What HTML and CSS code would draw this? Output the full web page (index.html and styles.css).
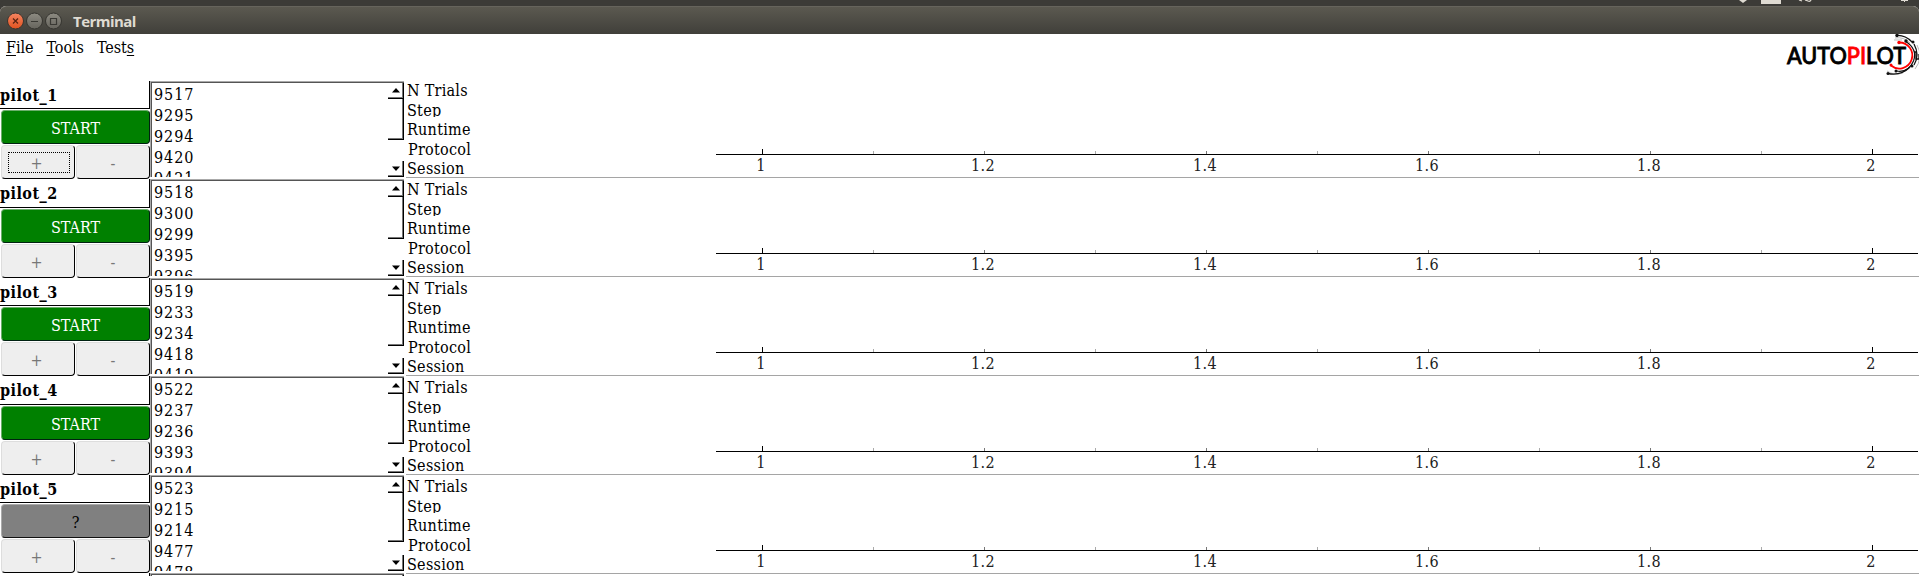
FILE: index.html
```
<!DOCTYPE html>
<html lang="en">
<head>
<meta charset="utf-8">
<title>Terminal</title>
<link rel="stylesheet" href="styles.css">
</head>
<body>
<div class="desktop-bar">
  <svg width="200" height="6" viewBox="0 0 200 6"><path d="M20 0h8l-4 3z" fill="#dfdbd2"/><path d="M42 0h20v4h-20z" fill="#dfdbd2"/><path d="M80 0l3 1M86 0l3 1q2 1 3-1" fill="none" stroke="#dfdbd2" stroke-width="1.3"/><path d="M182 .5h7M185.500 0v2" stroke="#dfdbd2"/></svg>
</div>
<header class="titlebar">
  <svg class="window-buttons" width="57" height="20" viewBox="0 0 57 20">
    <defs>
      <linearGradient id="orange" x2="0" y2="1"><stop stop-color="#f58562"/><stop offset="1" stop-color="#e0521f"/></linearGradient>
      <linearGradient id="grey" x2="0" y2="1"><stop stop-color="#8d8b82"/><stop offset="1" stop-color="#66645d"/></linearGradient>
    </defs>
    <g stroke="#35342f">
      <circle cx="10.500" cy="10" r="8" fill="url(#orange)"/>
      <circle cx="29.500" cy="10" r="8" fill="url(#grey)"/>
      <circle cx="48.500" cy="10" r="8" fill="url(#grey)"/>
    </g>
    <path d="M8 7.500l5 5M13 7.500l-5 5" stroke="#5b2412" stroke-width="1.300"/>
    <path d="M26 10.500h7M45.500 7.500h6v6h-6z" fill="none" stroke="#3a3934" stroke-width="1.200"/>
  </svg>
  <span class="window-title">Terminal</span>
</header>
<div class="top">
  <nav class="menu"><span><u>F</u>ile</span><span><u>T</u>ools</span><span>Test<u>s</u></span></nav>
  <svg class="logo" width="135" height="47" viewBox="1784 34 135 47">
    <g fill="none">
      <g stroke="#aaa" stroke-width=".8"><path d="M1895 38a17 17 0 0 1 15 5M1894 40h8M1887 71a18 18 0 0 0 16 2M1917 45a21 21 0 0 1 -2 24"/></g>
      <path d="M1897 35.500q8-.5 15 6.500M1914 44q6 11 0 21M1910 67q-9 9-22 6.500" stroke="#111" stroke-width="1.300"/>
      <path d="M1905 41q13 8 8.500 20q-5 12-17 10" stroke="#111" stroke-width="1.200"/>
      <path d="M1899 42.500a13 13 0 1 1-8 23" stroke="#f00" stroke-width="1.800"/>
      <path d="M1914 52h2v7h3v-5" stroke="#111" stroke-width="1.300"/>
    </g>
    <g fill="#111"><circle cx="1897" cy="35.500" r="1.700"/><circle cx="1913" cy="42" r="1.500"/><circle cx="1906" cy="41" r="1.700"/><circle cx="1888" cy="73.500" r="1.500"/><circle cx="1896" cy="71" r="1.500"/><circle cx="1912" cy="66" r="1.500"/></g>
    <g fill="#f00"><circle cx="1899" cy="42.500" r="1.700"/><circle cx="1891" cy="65" r="1.500"/></g>
    <text x="1787" y="63.800" textLength="119" lengthAdjust="spacingAndGlyphs" class="logo-text">AUTO<tspan fill="#f00">PI</tspan>LOT</text>
  </svg>
</div>
<main class="panels">
  <div class="pilots" id="pilots"></div>
  <div class="plots" id="plots"></div>
</main>
<script src="script.js"></script>
</body>
</html>
```

FILE: styles.css
```
body { margin: 0; width: 1919px; height: 576px; overflow: hidden; background: #fff; color: #000; font: 16px/20px "DejaVu Serif Condensed", "DejaVu Serif", serif; }
svg { display: block; }
.desktop-bar { height: 6px; background: #3c3b37; display: flex; justify-content: flex-end; }
.titlebar { height: 28px; box-sizing: border-box; background: linear-gradient(#5b5950, #403f3a); border-top: 1px solid #66645c; border-radius: 6px 6px 0 0; display: flex; align-items: center; padding-left: 5px; box-shadow: 0 -6px #3c3b37; }
.window-title { margin-left: 11px; font: bold 15px/20px "Open Sans", "Noto Sans", sans-serif; letter-spacing: -.55px; color: #dfdbd2; }
.top { height: 45px; display: flex; justify-content: space-between; }
.menu { display: flex; gap: 13px; padding: 4px 0 0 6px; height: 20px; letter-spacing: -.05px; }
.menu u { text-decoration-thickness: 1px; text-underline-offset: 2px; }
.logo-text { font: 500 22.500px "Lato", sans-serif; fill: #000; stroke: #000; stroke-width: .8px; }
.logo-text tspan { fill: #f00; stroke: #f00; }

.panels { display: flex; height: 497px; overflow: hidden; }
.pilots { width: 404px; padding-top: 2px; flex: none; }
.pilot { display: flex; height: 98px; }
.pilot:nth-child(even) { height: 99px; }
.controls { width: 150px; display: flex; flex-direction: column; gap: 1px; flex: none; }
.name { box-sizing: border-box; height: 28px; border-right: 1px solid #000; border-bottom: 1px solid #000; font-weight: bold; line-height: 30px; letter-spacing: .45px; }
.pilot:nth-child(even) .name { height: 29px; }
.btn { box-sizing: border-box; height: 34px; border-radius: 4px; border: 1px solid #ddd; border-right-color: #000; border-bottom-color: #000; background: #eee; color: #777; display: flex; align-items: center; justify-content: center; padding-top: 4px; }
.state { margin-left: 1px; flex: none; background: #008000; border-color: #6cae6c #021 #021 #6cae6c; color: #fff; letter-spacing: -.05px; }
.state.unknown { background: #808080; border-color: #aaa #111 #111 #aaa; color: #000; }
.pair { display: grid; grid-template-columns: 74px 74px; gap: 1px; padding-left: 1px; height: 34px; }
.pair .btn:first-child { padding-right: 3px; }
.focused { position: relative; }
.focused::after { content: ""; position: absolute; inset: 6px 4px 5px 6px; border: 1px dotted #000; }

.list { box-sizing: border-box; width: 254px; display: flex; height: 96px; overflow: hidden; }
.pilot:nth-child(even) .list { height: 97px; }
.list-inner { box-sizing: border-box; width: 254px; border-left: 1px solid #aaa; border-top: 1px solid #aaa; display: flex; overflow: hidden; }
.list-body { box-sizing: border-box; flex: 1; border-left: 1px solid #555; border-top: 1px solid #555; padding: 1px 0 0 2px; line-height: 21px; letter-spacing: .95px; display: flex; justify-content: space-between; }
.scroll { width: 16px; letter-spacing: 0; display: flex; flex-direction: column; margin-top: -1px; }
.arrow, .handle { box-sizing: border-box; border-right: 1px solid #000; border-bottom: 1px solid #000; box-shadow: inset -1px -1px #777; flex: none; }
.arrow { height: 16px; display: flex; align-items: center; justify-content: center; }
.gap { flex: 1; }

.plots { flex: 1; }
.plot { height: 99px; display: flex; position: relative; }
.plot::after { content: ""; position: absolute; left: 2px; right: 0; bottom: 0; height: 1px; background: #a5a5a5; }
.labels { width: 312px; padding-left: 3px; box-sizing: border-box; }
.labels div { height: 20px; line-height: 22px; overflow: hidden; letter-spacing: .25px; }
.labels div:nth-child(1) { height: 21px; line-height: 23px; }
.labels div:nth-child(2) { height: 17px; }
.labels div:nth-child(3) { height: 19px; line-height: 25px; }
.labels div:nth-child(4) { padding-left: 1px; line-height: 27px; }
.labels div:nth-child(5) { line-height: 25px; }
.axis text { text-anchor: middle; fill: #222; letter-spacing: .4px; }
```

FILE: script.js
```
const pilots = [
  { name: "pilot_1", state: "START", items: [9517, 9295, 9294, 9420, 9421], handle: 41 },
  { name: "pilot_2", state: "START", items: [9518, 9300, 9299, 9395, 9396], handle: 42 },
  { name: "pilot_3", state: "START", items: [9519, 9233, 9234, 9418, 9419], handle: 50 },
  { name: "pilot_4", state: "START", items: [9522, 9237, 9236, 9393, 9394], handle: 50 },
  { name: "pilot_5", state: "?", items: [9523, 9215, 9214, 9477, 9478], handle: 49 },
  { name: "", state: "", items: [], handle: 49 }
];

const arrow = d => `<svg width="8" height="5" viewBox="0 0 8 5"><path d="${d}"/></svg>`;

document.getElementById("pilots").innerHTML = pilots.map((p, i) => `
  <section class="pilot">
    <div class="controls">
      <div class="name">${p.name}</div>
      <div class="btn state ${p.state === "?" ? "unknown" : ""}">${p.state}</div>
      <div class="pair"><div class="btn ${i === 0 ? "focused" : ""}">+</div><div class="btn">-</div></div>
    </div>
    <div class="list"><div class="list-inner"><div class="list-body">
      <div>${p.items.map(n => `<div>${n}</div>`).join("")}</div>
      <div class="scroll">
        <div class="arrow">${arrow("M0 4.500L4 0L8 4.500z")}</div>
        <div class="handle" style="height:${p.handle}px"></div>
        <div class="gap"></div>
        <div class="arrow">${arrow("M0 .5L4 5L8 .5z")}</div>
      </div>
    </div></div></div>
  </section>`).join("");

const ticks = [1, 1.1, 1.2, 1.3, 1.4, 1.5, 1.6, 1.7, 1.8, 1.9, 2];
const axis = ticks.map((t, i) => {
  const x = 46.5 + i * 111;
  const whole = i % 10 === 0;
  const line = `<path d="M${x} ${whole ? 70 : 72}V75" stroke="${whole ? "#000" : i % 2 ? "#aaa" : "#777"}"/>`;
  return line + (i % 2 ? "" : `<text x="${x - 1.5}" y="92">${t}</text>`);
}).join("");

document.getElementById("plots").innerHTML = pilots.slice(0, 5).map(() => `
  <section class="plot">
    <div class="labels"><div>N Trials</div><div>Step</div><div>Runtime</div><div>Protocol</div><div>Session</div></div>
    <svg class="axis" width="1203" height="98">${axis}<path d="M0 75.500H1202" stroke="#000"/></svg>
  </section>`).join("");
```
